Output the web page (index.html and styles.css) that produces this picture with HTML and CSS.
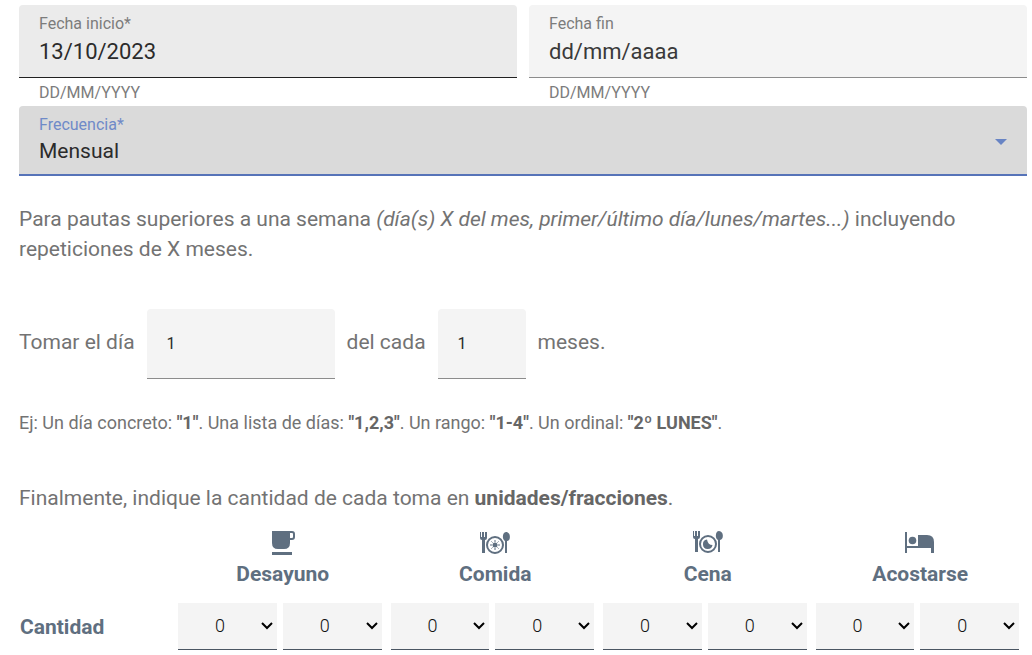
FILE: index.html
```html
<!DOCTYPE html>
<html lang="es">
<head>
<meta charset="utf-8">
<meta name="viewport" content="width=device-width, initial-scale=1">
<title>Pauta de medicación</title>
<link rel="stylesheet" href="styles.css">
</head>
<body>
<form class="form">
  <div class="dates">
    <div class="date">
      <div class="field field-date field-hover">
        <label class="label" for="start">Fecha inicio*</label>
        <input class="value" id="start" type="text" value="13/10/2023" required>
      </div>
      <p class="hint">DD/MM/YYYY</p>
    </div>
    <div class="date">
      <div class="field field-date">
        <label class="label" for="end">Fecha fin</label>
        <input class="value" id="end" type="text" placeholder="dd/mm/aaaa">
      </div>
      <p class="hint">DD/MM/YYYY</p>
    </div>
  </div>

  <div class="field field-select">
    <label class="label" for="frequency">Frecuencia*</label>
    <select class="value" id="frequency"><option>Mensual</option></select>
    <svg class="arrow" viewBox="0 0 12 6" aria-hidden="true"><path d="M0 0h12L6 6z"/></svg>
  </div>

  <p class="text intro">Para pautas superiores a una semana <em>(día(s) X del mes, primer/último día/lunes/martes...)</em> incluyendo repeticiones de X meses.</p>

  <div class="sentence">
    <label class="word" for="day">Tomar el día</label>
    <input class="box box-day" id="day" type="text" value="1">
    <label class="word" for="months">del cada</label>
    <input class="box box-months" id="months" type="text" value="1">
    <span class="word">meses.</span>
  </div>

  <p class="example">Ej: Un día concreto: <b>"1"</b>. Una lista de días: <b>"1,2,3"</b>. Un rango: <b>"1-4"</b>. Un ordinal: <b>"2º LUNES"</b>.</p>

  <p class="text amount">Finalmente, indique la cantidad de cada toma en <b>unidades/fracciones</b>.</p>

  <table class="doses">
    <thead>
      <tr>
        <td class="corner"></td>
        <th scope="col">
          <svg class="icon" viewBox="0 0 32 26" aria-hidden="true"><path fill-rule="evenodd" d="M5 1h20q3 0 3 3v3q0 3-3 3h-2v3q0 6-6 6h-6q-6 0-6-6zM23 3v5h2q1 0 1-1V4q0-1-1-1zM5 22h20v3H5z"/></svg>
          <span>Desayuno</span>
        </th>
        <th scope="col">
          <svg class="icon" viewBox="0 0 32 26" aria-hidden="true"><path d="M1 2h1v5h1V2h2v5h1V2h2v6q0 2-2 2v13H3V10q-2 0-2-2zM27 2c5 0 5 9 1 9v12h-2V11c-3-1-3-9 1-9z"/><circle cx="16" cy="15" r="8" fill="none" stroke="currentColor" stroke-width="2"/><circle cx="16" cy="15" r="2.500"/><path d="M16 10v2M16 18v2M11 15h2M19 15h2M12.500 11.500l1 1M18.500 17.500l1 1M19.500 11.500l-1 1M13.500 17.500l-1 1" stroke="currentColor"/></svg>
          <span>Comida</span>
        </th>
        <th scope="col">
          <svg class="icon" viewBox="0 0 32 26" aria-hidden="true"><path d="M1 1h1v5h1V1h2v5h1V1h2v6q0 2-2 2v13H3V9q-2 0-2-2zM27 1c5 0 5 9 1 9v12h-2V10c-3-1-3-9 1-9z"/><circle cx="16" cy="14" r="8" fill="none" stroke="currentColor" stroke-width="2"/><path d="M15 9.500A4.800 4.800 0 1 0 20.500 15Q16 15 15 9.500z"/></svg>
          <span>Cena</span>
        </th>
        <th scope="col">
          <svg class="icon" viewBox="0 0 32 26" aria-hidden="true"><path d="M1 2h2v14h11V5h9q7 0 7 7v11h-3v-5H3v5H1z"/><circle cx="8.500" cy="10.500" r="3.800"/></svg>
          <span>Acostarse</span>
        </th>
      </tr>
    </thead>
    <tbody>
      <tr>
        <th class="row-name" scope="row">Cantidad</th>
        <td><div class="pair"><select class="dose" aria-label="Desayuno, unidades"><option>0</option></select><select class="dose" aria-label="Desayuno, fracciones"><option>0</option></select></div></td>
        <td><div class="pair"><select class="dose" aria-label="Comida, unidades"><option>0</option></select><select class="dose" aria-label="Comida, fracciones"><option>0</option></select></div></td>
        <td><div class="pair"><select class="dose" aria-label="Cena, unidades"><option>0</option></select><select class="dose" aria-label="Cena, fracciones"><option>0</option></select></div></td>
        <td><div class="pair"><select class="dose" aria-label="Acostarse, unidades"><option>0</option></select><select class="dose" aria-label="Acostarse, fracciones"><option>0</option></select></div></td>
      </tr>
    </tbody>
  </table>
</form>
</body>
</html>
```
FILE: styles.css
```css
* {
  box-sizing: border-box;
}

body {
  margin: 0;
  background: #fff;
  color: #737373;
  font-family: Roboto, sans-serif;
  font-size: 21px;
  font-weight: 400;
  line-height: 30px;
}

p {
  margin: 0;
}

b {
  color: #666;
  font-weight: 700;
}

input,
select {
  margin: 0;
  border: 0;
  border-radius: 0;
  outline: 0;
  background: transparent;
  color: #2b2b2b;
  font: inherit;
}

.form {
  padding: 5px 5px 5px 19px;
}

.dates {
  display: grid;
  grid-template-columns: 1fr 1fr;
  gap: 12px;
}

.field {
  display: flex;
  flex-direction: column;
  padding: 8px 20px 0;
  border-bottom: 1px solid #8c8c8c;
  border-radius: 4px 4px 0 0;
  background: #f4f4f4;
}

.field-date {
  height: 73px;
}

.field-date .value {
  font-size: 22px;
}

.field-hover {
  border-color: #212121;
  background: #ebebeb;
}

.label {
  color: #7c7c7c;
  font-size: 16px;
  line-height: 22px;
}

.value {
  width: 100%;
  height: 32px;
  padding: 0;
}

.value::placeholder {
  color: #3a3a3a;
  opacity: 1;
}

.hint {
  padding: 1px 0 0 20px;
  color: #7c7c7c;
  font-size: 16px;
  line-height: 27px;
}

.field-select {
  position: relative;
  height: 70px;
  border-bottom: 2px solid #5673b8;
  background: #dadada;
}

.field-select .label {
  color: #6f8ac8;
}

.field-select .value {
  height: 30px;
  appearance: none;
}

.arrow {
  position: absolute;
  top: 33px;
  right: 20px;
  width: 12px;
  height: 6px;
  fill: #6884c4;
  pointer-events: none;
}

.intro {
  margin-top: 28px;
}

.sentence {
  display: flex;
  align-items: center;
  gap: 12px;
  margin-top: 45px;
}

.word {
  padding-bottom: 4px;
}

.box {
  height: 70px;
  padding: 0 20px;
  border-bottom: 1px solid #8c8c8c;
  border-radius: 4px 4px 0 0;
  background: #f4f4f4;
  font-size: 16px;
}

.box-day {
  width: 188px;
}

.box-months {
  width: 88px;
}

.example {
  margin-top: 29px;
  font-size: 18px;
}

.amount {
  margin-top: 45px;
}

.doses {
  width: 100%;
  margin-top: 14px;
  border-collapse: collapse;
  table-layout: fixed;
  color: #5f6f80;
}

.doses th,
.doses td {
  padding: 0;
  font-weight: 700;
}

.doses .corner {
  width: 158px;
}

.doses .row-name {
  padding-left: 1px;
  text-align: left;
}

.doses thead th {
  padding-right: 1px;
}

.icon {
  display: block;
  width: 32px;
  height: 26px;
  margin: 3px auto;
  fill: currentColor;
}

.doses tbody td {
  padding: 14px 8px 0 1px;
}

.doses .row-name {
  padding-top: 14px;
}

.pair {
  display: grid;
  grid-template-columns: 1fr 1fr;
  gap: 6px;
}

.dose {
  width: 100%;
  height: 47px;
  padding: 0 15px 0 0;
  border-bottom: 1px solid #4a5562;
  appearance: none;
  background: #f4f4f4 url("data:image/svg+xml,%3Csvg xmlns='http://www.w3.org/2000/svg' width='12' height='8' viewBox='0 0 12 8'%3E%3Cpath d='M1 1l5 5 5-5' fill='none' stroke='black' stroke-width='2'/%3E%3C/svg%3E") no-repeat right 4px center;
  color: #111;
  font-size: 18px;
  font-weight: 300;
  text-align: center;
  text-align-last: center;
}
```
